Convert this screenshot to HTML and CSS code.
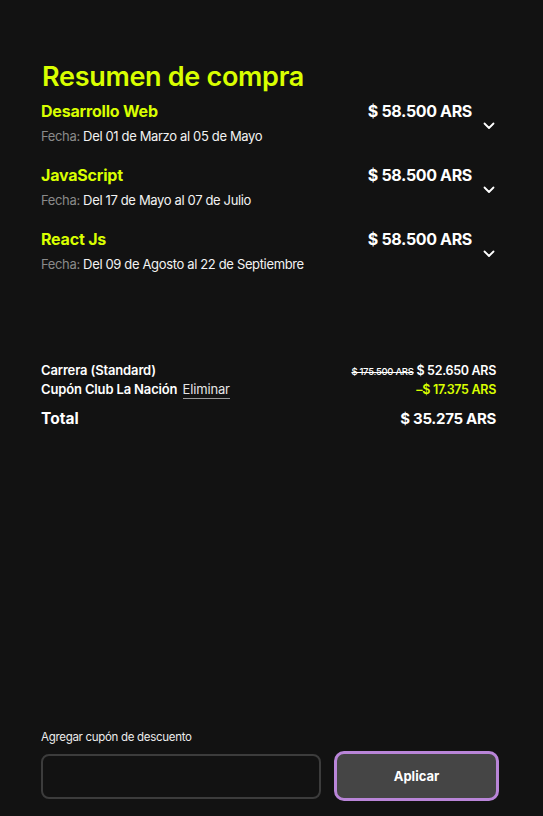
FILE: index.html
```html
<!DOCTYPE html>
<html lang="es">
<head>
<meta charset="utf-8">
<link rel="stylesheet" href="styles.css">
</head>
<body>
<div class="page">
  <h1 class="title">Resumen de compra</h1>
  <ul class="items">
    <li class="item">
      <div class="item-info">
        <div class="item-name">Desarrollo Web</div>
        <div class="item-date"><span class="muted">Fecha:</span> Del 01 de Marzo al 05 de Mayo</div>
      </div>
      <div class="item-price">$ 58.500 ARS</div>
      <svg class="chevron" width="12" height="8" viewBox="0 0 12 8"><path d="M1.5 1.5 L6 6 L10.5 1.5" fill="none" stroke="#fff" stroke-width="1.8" stroke-linecap="round" stroke-linejoin="round"/></svg>
    </li>
    <li class="item">
      <div class="item-info">
        <div class="item-name">JavaScript</div>
        <div class="item-date"><span class="muted">Fecha:</span> Del 17 de Mayo al 07 de Julio</div>
      </div>
      <div class="item-price">$ 58.500 ARS</div>
      <svg class="chevron" width="12" height="8" viewBox="0 0 12 8"><path d="M1.5 1.5 L6 6 L10.5 1.5" fill="none" stroke="#fff" stroke-width="1.8" stroke-linecap="round" stroke-linejoin="round"/></svg>
    </li>
    <li class="item">
      <div class="item-info">
        <div class="item-name">React Js</div>
        <div class="item-date"><span class="muted">Fecha:</span> Del 09 de Agosto al 22 de Septiembre</div>
      </div>
      <div class="item-price">$ 58.500 ARS</div>
      <svg class="chevron" width="12" height="8" viewBox="0 0 12 8"><path d="M1.5 1.5 L6 6 L10.5 1.5" fill="none" stroke="#fff" stroke-width="1.8" stroke-linecap="round" stroke-linejoin="round"/></svg>
    </li>
  </ul>

  <div class="summary">
    <div class="sum-row">
      <span class="sum-label">Carrera (Standard)</span>
      <span><s class="old">$ 175.500 ARS</s> $ 52.650 ARS</span>
    </div>
    <div class="sum-row">
      <span class="sum-label">Cupón Club La Nación <a class="remove">Eliminar</a></span>
      <span class="discount">–$ 17.375 ARS</span>
    </div>
    <div class="sum-row total">
      <span class="total-label">Total</span>
      <span>$ 35.275 ARS</span>
    </div>
  </div>

  <div class="coupon">
    <label class="coupon-label">Agregar cupón de descuento</label>
    <div class="coupon-row">
      <input class="coupon-input" type="text">
      <button class="apply">Aplicar</button>
    </div>
  </div>
</div>
</body>
</html>
```

FILE: styles.css
```css
html, body {
  margin: 0;
  padding: 0;
  background: #121212;
}
body {
  font-family: Inter, "Liberation Sans", sans-serif;
  color: #ffffff;
}
.page {
  box-sizing: border-box;
  height: 816px;
  padding: 61px 44px 15px 41px;
  display: flex;
  flex-direction: column;
}
.title {
  margin: 0 0 0 1px;
  font-size: 27px;
  line-height: 32px;
  font-weight: 600;
  color: #d9ff00;
  letter-spacing: -0.3px;
}
.items {
  list-style: none;
  margin: 8px 0 0;
  padding: 0;
  display: flex;
  flex-direction: column;
  gap: 20px;
}
.item {
  display: flex;
  align-items: flex-start;
}
.item-info {
  flex: 1;
}
.item-name {
  font-size: 16px;
  line-height: 20px;
  font-weight: 700;
  color: #d9ff00;
  letter-spacing: -0.2px;
}
.item-date {
  margin-top: 6px;
  font-size: 13px;
  line-height: 18px;
  color: #f2f2f2;
  letter-spacing: -0.35px;
}
.muted {
  color: #8a8a8a;
}
.item-price {
  font-size: 16px;
  line-height: 20px;
  font-weight: 700;
  letter-spacing: -0.35px;
  white-space: nowrap;
}
.chevron {
  margin: 21px 4px 0 11px;
  flex: none;
}
.summary {
  margin-top: 88px;
  padding-right: 3px;
  display: flex;
  flex-direction: column;
}
.sum-row {
  display: flex;
  justify-content: space-between;
  align-items: baseline;
  height: 19px;
  font-size: 12.5px;
  line-height: 19px;
  font-weight: 600;
  letter-spacing: -0.3px;
}
.sum-label {
  font-size: 13px;
  letter-spacing: -0.15px;
}
.old {
  font-size: 9.5px;
  font-weight: 500;
  letter-spacing: -0.3px;
}
.remove {
  margin-left: 2px;
  font-weight: 400;
  color: #e6e6e6;
  border-bottom: 1px solid #9a9a9a;
  padding-bottom: 1px;
}
.discount {
  color: #d9ff00;
}
.total {
  margin-top: 10px;
  height: 20px;
  font-size: 15px;
  line-height: 20px;
  font-weight: 700;
}
.total-label {
  font-size: 15.5px;
  letter-spacing: 0;
}
.coupon {
  margin-top: auto;
}
.coupon-label {
  display: block;
  font-size: 11.5px;
  line-height: 16px;
  color: #ececec;
  letter-spacing: -0.3px;
  margin-bottom: 6px;
}
.coupon-row {
  display: flex;
  align-items: center;
  gap: 13px;
}
.coupon-input {
  box-sizing: border-box;
  width: 280px;
  height: 45px;
  background: #121212;
  border: 2px solid #3c3c3c;
  border-radius: 8px;
  outline: none;
}
.apply {
  box-sizing: border-box;
  flex: 1;
  height: 50px;
  background: #454545;
  border: 3px solid #b985d8;
  border-radius: 10px;
  color: #ffffff;
  font-family: Inter, "Liberation Sans", sans-serif;
  font-size: 13px;
  font-weight: 700;
}
```
